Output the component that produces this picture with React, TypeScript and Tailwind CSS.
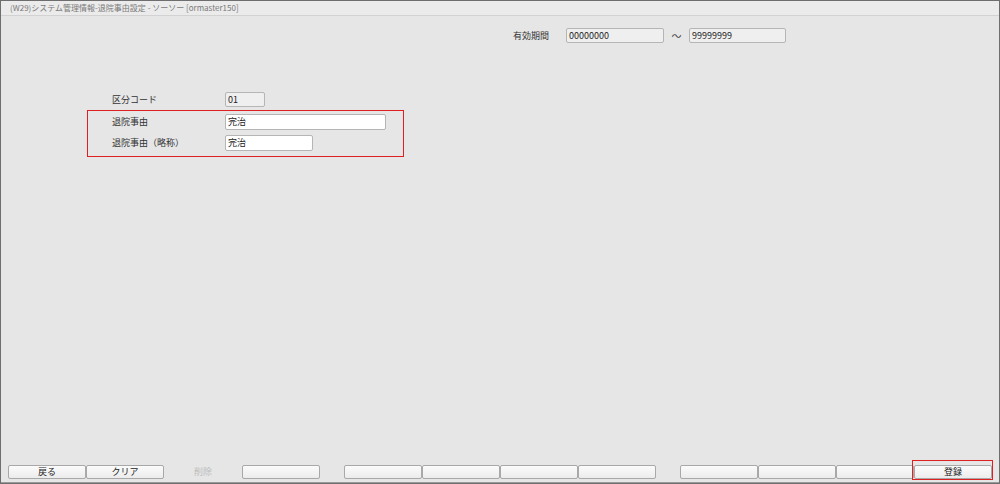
import React from 'react'

const font = { fontFamily: '"Noto Sans CJK JP", "Liberation Sans", sans-serif' }

const Field: React.FC<{ value: string; className: string }> = ({ value, className }) => (
  <div
    className={`h-[15px] border border-[#b5b5b5] rounded-[2px] text-[9px] leading-[13px] pl-[2px] text-[#222] ${className}`}
  >
    {value}
  </div>
)

const Btn: React.FC<{ label?: string; disabled?: boolean }> = ({ label = '', disabled }) => (
  <div
    className={`w-[78px] h-[14px] text-[9px] leading-[12px] text-center rounded-[2px] ${
      disabled
        ? 'text-[#bdbdbd] border border-transparent bg-[#e6e6e6]'
        : 'text-[#222] border border-[#a8a8a8] bg-gradient-to-b from-[#fbfbfb] to-[#ececec]'
    }`}
  >
    {label}
  </div>
)

export default function App() {
  return (
    <div style={font} className="w-[1000px] h-[484px] bg-[#6e6e6e] p-px">
      <div className="w-full h-full bg-[#e6e6e6] flex flex-col">
        <div className="h-[15px] bg-[#ebebeb] border-b border-[#d2d2d2] text-[8px] leading-[14px] text-[#7a7a7a] pl-[9px]">
          (W29)システム管理情報-退院事由設定 - ソーソー [ormaster150]
        </div>

        <div className="flex-1 relative">
          <div className="flex items-center pl-[512px] pt-[12px]">
            <div className="w-[53px] text-[9px] text-[#333]">有効期間</div>
            <Field value="00000000" className="w-[98px] bg-[#efefef]" />
            <div className="w-[25px] text-center text-[10px] text-[#444]">〜</div>
            <Field value="99999999" className="w-[97px] bg-[#efefef]" />
          </div>

          <div className="pl-[86px] pt-[49px]">
            <div className="flex items-center pl-[25px] h-[15px]">
              <div className="w-[113px] text-[9px] text-[#333]">区分コード</div>
              <Field value="01" className="w-[40px] bg-[#efefef]" />
            </div>
            <div className="w-[317px] h-[47px] border border-[#e02020] mt-[3px] pl-[24px] pt-[3px] flex flex-col gap-[5px]">
              <div className="flex items-center h-[16px]">
                <div className="w-[113px] text-[9px] text-[#333]">退院事由</div>
                <Field value="完治" className="w-[161px] h-[16px] bg-white" />
              </div>
              <div className="flex items-center h-[16px]">
                <div className="w-[113px] text-[9px] text-[#333]">退院事由（略称）</div>
                <Field value="完治" className="w-[88px] h-[16px] bg-white" />
              </div>
            </div>
          </div>
        </div>

        <div className="h-[18px] pl-[7px] flex items-start border-b border-[#9a9a9a]">
          <div className="flex">
            <Btn label="戻る" />
            <Btn label="クリア" />
            <Btn label="削除" disabled />
            <Btn />
          </div>
          <div className="flex ml-[24px]">
            <Btn />
            <Btn />
            <Btn />
            <Btn />
          </div>
          <div className="flex ml-[24px]">
            <Btn />
            <Btn />
            <Btn />
            <div className="relative">
              <Btn label="登録" />
              <div className="absolute left-[-2px] top-[-5px] w-[81px] h-[20px] border border-[#e02020]" />
            </div>
          </div>
        </div>
      </div>
    </div>
  )
}
